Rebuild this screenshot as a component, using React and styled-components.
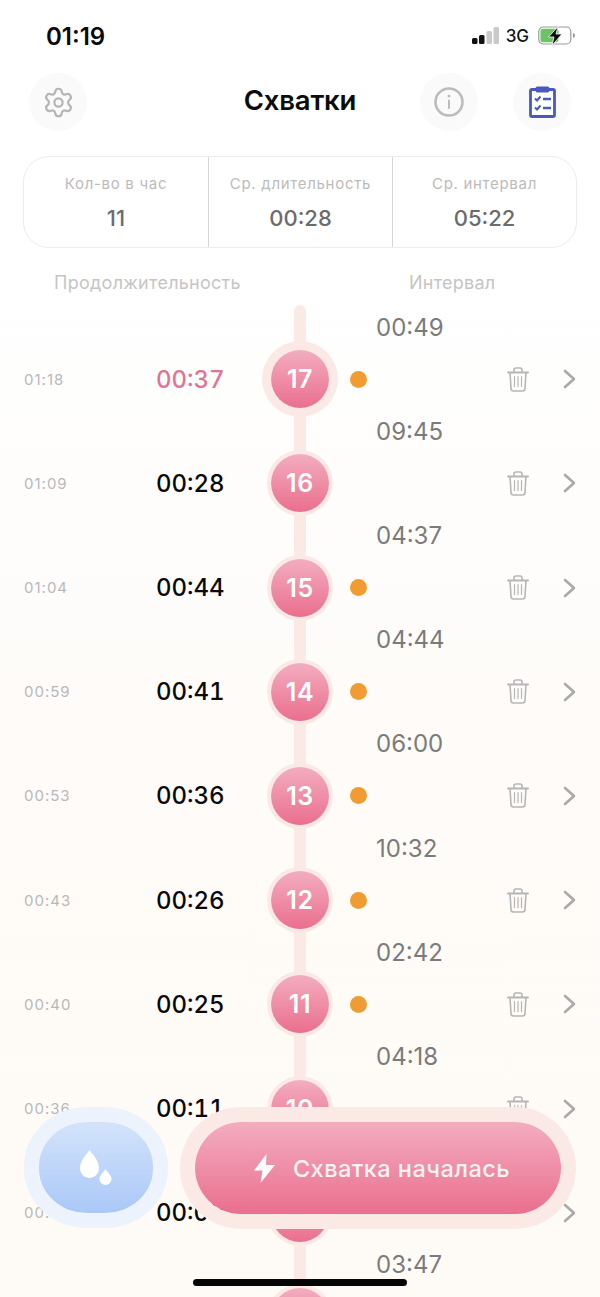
import React from 'react';
import styled, { createGlobalStyle } from 'styled-components';
import { Settings } from 'lucide-react';

const rows = [
  { id: 17, gapBefore: '00:49', start: '01:18', length: '00:37', dot: true, active: true },
  { id: 16, gapBefore: '09:45', start: '01:09', length: '00:28' },
  { id: 15, gapBefore: '04:37', start: '01:04', length: '00:44', dot: true },
  { id: 14, gapBefore: '04:44', start: '00:59', length: '00:41', dot: true },
  { id: 13, gapBefore: '06:00', start: '00:53', length: '00:36', dot: true },
  { id: 12, gapBefore: '10:32', start: '00:43', length: '00:26', dot: true },
  { id: 11, gapBefore: '02:42', start: '00:40', length: '00:25', dot: true },
  { id: 10, gapBefore: '04:18', start: '00:36', length: '00:11' },
  { id: 9, start: '00:32', length: '00:09' },
  { id: 8, gapBefore: '03:47', tail: true },
];

const stats = [
  { label: 'Кол-во в час', value: '11' },
  { label: 'Ср. длительность', value: '00:28' },
  { label: 'Ср. интервал', value: '05:22' },
];

const GlobalStyle = createGlobalStyle`
  html, body {
    margin: 0;
    padding: 0;
  }
  body {
    font-family: Inter, "Noto Sans", "Liberation Sans", sans-serif;
    background: #fff;
  }
`;

const Page = styled.div`
  position: relative;
  width: 600px;
  height: 1297px;
  overflow: hidden;
  background: linear-gradient(180deg, #ffffff 0%, #ffffff 20%, #fefbf8 60%, #fefbf7 100%);
`;

const StatusBar = styled.div`
  height: 72px;
  padding: 0 24px 0 46px;
  box-sizing: border-box;
  display: flex;
  align-items: center;
  justify-content: space-between;
`;

const Clock = styled.div`
  font-size: 24px;
  font-weight: 600;
  color: #0a0a0a;
`;

const StatusIcons = styled.div`
  display: flex;
  align-items: center;
  gap: 7px;
`;

const Network = styled.span`
  margin-right: 2px;
  font-size: 17px;
  font-weight: 500;
  color: #111;
`;

const Header = styled.header`
  display: grid;
  grid-template-columns: 58px 333px 58px 35px 58px;
  align-items: center;
  height: 60px;
  padding: 0 29px;
`;

const RoundButton = styled.button`
  grid-column: ${(p) => p.$col};
  width: 58px;
  height: 58px;
  padding: 0;
  border: none;
  border-radius: 50%;
  background: #fafafa;
  display: flex;
  align-items: center;
  justify-content: center;
`;

const Title = styled.h1`
  margin: 0 0 4px;
  padding-left: 93px;
  font-size: 27.5px;
  font-weight: 600;
  color: #0c0c0c;
  letter-spacing: -0.2px;
  text-align: center;
`;

const StatsCard = styled.section`
  margin: 24px 23px 0;
  height: 92px;
  box-sizing: border-box;
  border: 1.5px solid #ececec;
  border-radius: 26px;
  display: grid;
  grid-template-columns: repeat(3, 1fr);
`;

const Stat = styled.div`
  display: flex;
  flex-direction: column;
  align-items: center;
  padding-top: 18px;
  gap: 12px;
  & + & {
    border-left: 1px solid #d6d6d6;
  }
`;

const StatLabel = styled.span`
  font-size: 15px;
  line-height: 18px;
  color: #bcbcbc;
  letter-spacing: 0.7px;
`;

const StatValue = styled.span`
  font-size: 22px;
  line-height: 27px;
  font-weight: 500;
  color: #6c6c6c;
`;

const ColumnHeads = styled.div`
  height: 57px;
  box-sizing: border-box;
  padding: 12px 0 0 54px;
  display: flex;
  align-items: center;
  font-size: 18px;
  color: #c5c5c5;
  letter-spacing: 0.27px;
`;

const IntervalHead = styled.span`
  margin-left: 168px;
`;

const Timeline = styled.div`
  display: flex;
  flex-direction: column;
`;

const GapRow = styled.div`
  height: 44.2px;
  display: grid;
  grid-template-columns: 232px 136px 1fr;
  align-items: center;
`;

const Rail = styled.div`
  grid-column: 2;
  justify-self: center;
  width: 12px;
  height: 100%;
  background: #fbe9e6;
  border-radius: ${(p) => (p.$first ? '6px 6px 0 0' : '0')};
`;

const GapTime = styled.span`
  grid-column: 3;
  margin-left: 8px;
  font-size: 24px;
  color: #7b7b7b;
`;

const EventRow = styled.div`
  height: 60px;
  padding-left: 24px;
  display: grid;
  grid-template-columns: 132px 100px 88px 156px 36px 18px 30px;
  align-items: center;
`;

const StartTime = styled.span`
  font-size: 15px;
  letter-spacing: 1px;
  color: #b8b8b8;
`;

const Length = styled.span`
  font-size: 24px;
  font-weight: 500;
  font-variant-numeric: tabular-nums;
  color: ${(p) => (p.$active ? '#e07591' : '#0a0a0a')};
`;

const Node = styled.div`
  grid-column: 3;
  justify-self: center;
  position: relative;
  z-index: 1;
  width: 58px;
  height: 58px;
  border-radius: 50%;
  background: linear-gradient(180deg, #f3adc0 0%, #ea6f8e 100%);
  box-shadow: 0 0 0 ${(p) => (p.$active ? 9 : 4)}px #fbe9e6;
  display: flex;
  align-items: center;
  justify-content: center;
  font-size: 25px;
  font-weight: 600;
  letter-spacing: 0.6px;
  color: #fff;
`;

const Dot = styled.div`
  width: 17px;
  height: 17px;
  margin-left: 6px;
  border-radius: 50%;
  background: #f09c33;
`;

const IconCell = styled.div`
  grid-column: ${(p) => p.$col};
  display: flex;
  align-items: center;
  justify-content: center;
`;

const Actions = styled.div`
  position: absolute;
  z-index: 2;
  left: 39px;
  top: 1122px;
  display: flex;
  gap: 42px;
`;

const DropButton = styled.button`
  width: 114px;
  height: 91px;
  padding: 0;
  border: none;
  border-radius: 48px / 44px;
  background: linear-gradient(180deg, #d3e3fb 0%, #aac8f7 100%);
  box-shadow: 0 0 0 15px #edf3fc;
  display: flex;
  align-items: center;
  justify-content: center;
`;

const StartButton = styled.button`
  width: 366px;
  height: 92px;
  padding: 0 0 0 7px;
  border: none;
  border-radius: 46px;
  background: linear-gradient(180deg, #f3adc0 0%, #ea6f8e 100%);
  box-shadow: 0 0 0 15px #fbe9e6;
  display: flex;
  align-items: center;
  justify-content: center;
  gap: 17px;
  font-family: inherit;
  font-size: 23.5px;
  font-weight: 500;
  letter-spacing: 0.45px;
  color: #fdf3f3;
`;

const HomeBar = styled.div`
  position: absolute;
  z-index: 3;
  left: 193px;
  top: 1279px;
  width: 214px;
  height: 7px;
  border-radius: 4px;
  background: #050505;
`;

// status bar glyphs
const SignalIcon = () => (
  <svg width="27" height="18" viewBox="0 0 27 18">
    <rect x="0" y="11" width="5.500" height="6" rx="1.500" fill="#111" />
    <rect x="7" y="8" width="5.500" height="9" rx="1.500" fill="#111" />
    <rect x="14.500" y="4" width="5.500" height="13" rx="1.500" fill="#c9c9c9" />
    <rect x="21.500" y="0" width="5.500" height="17" rx="1.500" fill="#c9c9c9" />
  </svg>
);

const BatteryIcon = () => (
  <svg width="38" height="20" viewBox="0 0 38 20">
    <rect x="0.800" y="1" width="32" height="17" rx="4.500" fill="none" stroke="#9a9a9a" strokeWidth="1.200" />
    <rect x="2.500" y="2.800" width="18" height="13.400" rx="2.500" fill="#6cc364" />
    <path d="M35 7v5c1.400-.4 2-1.400 2-2.500s-.6-2.100-2-2.500z" fill="#9a9a9a" />
    <path d="M20 0.500 10.500 11h5.500l-2 8.500L24 8h-6z" fill="#0d0d0d" stroke="#fff" strokeWidth="0.800" />
  </svg>
);

const InfoIcon = () => (
  <svg width="30" height="30" viewBox="0 0 30 30">
    <circle cx="15" cy="15" r="13.500" fill="none" stroke="#bcbcbc" strokeWidth="2.600" />
    <circle cx="15" cy="9" r="1.500" fill="#bcbcbc" />
    <rect x="14" y="12.500" width="2" height="9.500" rx="1" fill="#bcbcbc" />
  </svg>
);

const ClipboardIcon = () => (
  <svg width="27" height="32" viewBox="0 0 27 32">
    <rect x="1.500" y="3.500" width="24" height="27" rx="1.500" fill="#fff" stroke="#4a59bf" strokeWidth="2.800" />
    <rect x="6.500" y="0.500" width="14" height="6" rx="2" fill="#4a59bf" />
    <path d="M6 12.500l2 2 3.500-4M6 21.500l2 2 3.500-4" fill="none" stroke="#4a59bf" strokeWidth="2" />
    <path d="M14 13h8M14 22h8" stroke="#4a59bf" strokeWidth="2.400" />
  </svg>
);

const TrashIcon = () => (
  <svg width="22" height="25" viewBox="0 0 22 25" fill="none" stroke="#b6b6b6" strokeWidth="1.600" strokeLinecap="round">
    <path d="M1 5.500h20" strokeWidth="2" />
    <path d="M7 5V3a2 2 0 0 1 2-2h4a2 2 0 0 1 2 2v2" />
    <path d="M3 5.500l1 16a2.500 2.500 0 0 0 2.500 2.500h9a2.500 2.500 0 0 0 2.500-2.500l1-16" />
    <path d="M7.500 9.500v10M11 9.500v10M14.500 9.500v10" strokeWidth="1.200" />
  </svg>
);

const ChevronIcon = () => (
  <svg width="13" height="20" viewBox="0 0 13 20" fill="none" stroke="#a9a9a9" strokeWidth="2.600" strokeLinecap="round" strokeLinejoin="round">
    <path d="M2 2l9 8-9 8" />
  </svg>
);

const DropsIcon = () => (
  <svg width="32" height="35" viewBox="0 0 32 35" fill="#fff">
    <path d="M9.500 0c2.500 4 9.500 10 9.500 18.500a9.500 9.500 0 0 1-19 0C0 10 7 4 9.500 0z" />
    <path d="M25.500 19c1.200 2.200 6 6 6 10a6 6 0 0 1-12 0c0-4 4.800-7.800 6-10z" />
  </svg>
);

const BoltIcon = () => (
  <svg width="23" height="29" viewBox="0 0 23 29" fill="#fff">
    <path d="M13.500 0 1 16.500h8.500L7.500 29 22 11h-9z" />
  </svg>
);

const App = () => (
  <Page>
    <GlobalStyle />
    <StatusBar>
      <Clock>01:19</Clock>
      <StatusIcons>
        <SignalIcon />
        <Network>3G</Network>
        <BatteryIcon />
      </StatusIcons>
    </StatusBar>

    <Header>
      <RoundButton $col={1}>
        <Settings size={33} color="#b5b5b5" strokeWidth={1.6} />
      </RoundButton>
      <Title>Схватки</Title>
      <RoundButton $col={3}>
        <InfoIcon />
      </RoundButton>
      <RoundButton $col={5}>
        <ClipboardIcon />
      </RoundButton>
    </Header>

    <StatsCard>
      {stats.map((s) => (
        <Stat key={s.label}>
          <StatLabel>{s.label}</StatLabel>
          <StatValue>{s.value}</StatValue>
        </Stat>
      ))}
    </StatsCard>

    <ColumnHeads>
      <span>Продолжительность</span>
      <IntervalHead>Интервал</IntervalHead>
    </ColumnHeads>

    <Timeline>
      {rows.map((r, i) => (
        <React.Fragment key={r.id}>
          <GapRow>
            <Rail $first={i === 0} />
            {r.gapBefore && <GapTime>{r.gapBefore}</GapTime>}
          </GapRow>
          {r.tail ? (
            <EventRow>
              <Node />
            </EventRow>
          ) : (
            <EventRow>
              <StartTime>{r.start}</StartTime>
              <Length $active={r.active}>{r.length}</Length>
              <Node $active={r.active}>{r.id}</Node>
              <div>{r.dot && <Dot />}</div>
              <IconCell $col={5}>
                <TrashIcon />
              </IconCell>
              <IconCell $col={7}>
                <ChevronIcon />
              </IconCell>
            </EventRow>
          )}
        </React.Fragment>
      ))}
    </Timeline>

    <Actions>
      <DropButton>
        <DropsIcon />
      </DropButton>
      <StartButton>
        <BoltIcon />
        Схватка началась
      </StartButton>
    </Actions>
    <HomeBar />
  </Page>
);

export default App;
